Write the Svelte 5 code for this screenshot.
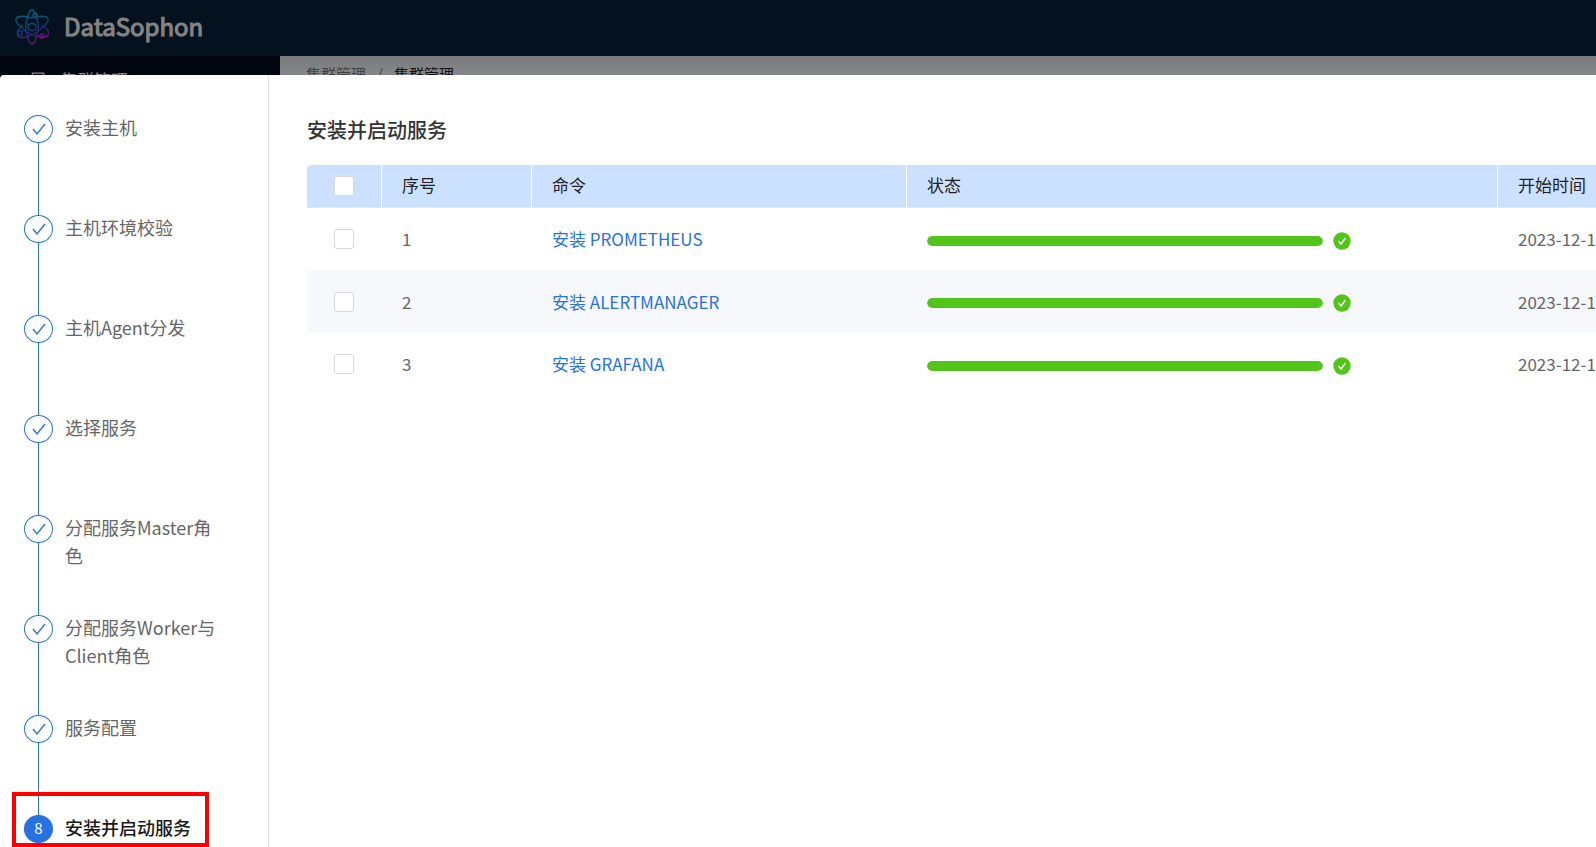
<script lang="ts">
  type Step = { title: string; done: boolean };
  type Command = { id: number; name: string; percent: number; startTime: string };

  const steps: Step[] = [
    { title: '安装主机', done: true },
    { title: '主机环境校验', done: true },
    { title: '主机Agent分发', done: true },
    { title: '选择服务', done: true },
    { title: '分配服务Master角色', done: true },
    { title: '分配服务Worker与Client角色', done: true },
    { title: '服务配置', done: true },
    { title: '安装并启动服务', done: false },
  ];

  const commands: Command[] = [
    { id: 1, name: '安装 PROMETHEUS', percent: 100, startTime: '2023-12-1' },
    { id: 2, name: '安装 ALERTMANAGER', percent: 100, startTime: '2023-12-1' },
    { id: 3, name: '安装 GRAFANA', percent: 100, startTime: '2023-12-1' },
  ];

  let selected: number[] = $state([]);
  let allSelected = $derived(selected.length === commands.length);

  function toggleAll() {
    selected = allSelected ? [] : commands.map((c) => c.id);
  }
</script>

<div class="layout">
  <header class="topbar">
    <svg class="logo" viewBox="0 0 34 36" aria-hidden="true">
      <defs>
        <linearGradient id="atom" gradientUnits="userSpaceOnUse" x1="12" y1="0" x2="22" y2="36">
          <stop offset="0" stop-color="#00c8dc" />
          <stop offset="0.5" stop-color="#1470d8" />
          <stop offset="0.7" stop-color="#6a3ad0" />
          <stop offset="0.9" stop-color="#f01ccc" />
        </linearGradient>
      </defs>
      <g fill="none" stroke="url(#atom)" stroke-width="1.4">
        <path d="M12 11c1-6 3-10 5-10s4 4 5 10" />
        <path d="M12 25c1 6 3 10 5 10s4-4 5-10" />
        <path d="M17 9C9 6 2 7 1 10s5 9 13 14 17 5 19 2-1-7-6-10" />
        <path d="M17 9c8-3 15-2 16 1s-5 9-13 14-15 6-17 3 0-7 5-11" />
        <path d="M12 11c-2 5-2 9 0 14M22 11c2 5 2 9 0 14" />
        <path d="M17 14l4 2v4l-4 2-4-2v-4z" />
        <circle cx="20" cy="6" r="2" />
        <circle cx="27" cy="27" r="2" />
        <path d="M3 22h4v4H3z" />
      </g>
    </svg>
    <span class="brand">DataSophon</span>
  </header>
  <div class="body">
    <aside class="side">
      <svg class="side-icon" viewBox="0 0 14 14" aria-hidden="true">
        <path d="M2 1h10v12H2zM5 5h4M5 8h4" fill="none" stroke="#fff" />
      </svg>
      <span>集群管理</span>
    </aside>
    <nav class="crumbs">
      <span>集群管理</span>
      <span>/</span>
      <span class="current">集群管理</span>
    </nav>
  </div>
</div>

<div class="mask"></div>

<div class="modal" role="dialog" aria-label="安装并启动服务">
  <ol class="steps">
    {#each steps as step, i}
      <li class="step" class:active={!step.done}>
        <span class="step-icon">
          {#if step.done}
            <svg viewBox="0 0 14 14" aria-hidden="true">
              <path d="M1 7l4 5 8-10" fill="none" stroke="currentColor" stroke-width="1.4" />
            </svg>
          {:else}
            {i + 1}
          {/if}
        </span>
        <span class="step-title">{step.title}</span>
        {#if !step.done}
          <span class="highlight"></span>
        {/if}
      </li>
    {/each}
  </ol>

  <main class="content">
    <h1>安装并启动服务</h1>
    <table>
      <colgroup>
        <col class="col-check" />
        <col class="col-index" />
        <col class="col-name" />
        <col class="col-status" />
        <col />
      </colgroup>
      <thead>
        <tr>
          <th class="check">
            <input type="checkbox" aria-label="全选" checked={allSelected} onchange={toggleAll} />
          </th>
          <th>序号</th>
          <th>命令</th>
          <th>状态</th>
          <th>开始时间</th>
        </tr>
      </thead>
      <tbody>
        {#each commands as command (command.id)}
          <tr>
            <td class="check">
              <input type="checkbox" aria-label={command.name} value={command.id} bind:group={selected} />
            </td>
            <td>{command.id}</td>
            <td><a href="#{command.id}">{command.name}</a></td>
            <td>
              <div class="progress">
                <div class="track">
                  <div class="bar" style="width: {command.percent}%"></div>
                </div>
                <svg viewBox="0 0 18 18" aria-hidden="true">
                  <circle cx="9" cy="9" r="8.7" fill="#52c41a" />
                  <path d="M5.5 9l2.5 3 4.5-6" fill="none" stroke="#fff" stroke-width="1.4" />
                </svg>
              </div>
            </td>
            <td>{command.startTime}</td>
          </tr>
        {/each}
      </tbody>
    </table>
  </main>
</div>

<style>
  :global(body) {
    margin: 0;
    overflow: hidden;
    font-family: "Noto Sans CJK SC", sans-serif;
  }

  .layout { display: flex; flex-direction: column; height: 100vh; background: #f0f2f5; }
  .topbar { display: flex; align-items: center; gap: 15px; height: 56px; padding: 0 15px; box-sizing: border-box; background: #08203a; }
  .logo { width: 34px; height: 36px; padding-bottom: 2px; }
  .brand { padding-bottom: 4px; color: #f0f0f0; font-size: 24px; line-height: 36px; font-weight: 400; -webkit-text-stroke: 1px #f0f0f0; }
  .body { display: flex; flex: 1; }
  .side {
    display: flex; gap: 14px; width: 280px; padding: 12px 30px; box-sizing: border-box;
    background: #030c1c; color: #fff; font-size: 17px; line-height: 24px;
  }
  .side-icon { width: 16px; height: 24px; }
  .crumbs {
    display: flex; flex: 1; gap: 11px; padding: 7px 26px; font-size: 15px; line-height: 22px; color: #777;
    background: linear-gradient(#dcdee0, #f0f2f5 16px);
  }
  .crumbs .current { color: #222; }

  .mask { position: fixed; inset: 0; background: rgba(0, 0, 0, 0.45); }

  .modal {
    position: fixed; inset: 75px 0 0; display: flex; overflow: hidden;
    background: #fff; border-radius: 4px 0 0;
  }

  .steps {
    flex: none; width: 269px; margin: 0; padding: 40px 24px 0; box-sizing: border-box;
    list-style: none; border-right: 1px solid #e4e4e4;
  }
  .step { position: relative; display: flex; gap: 12px; height: 100px; color: #666; }
  .step:not(:last-child)::after {
    content: ""; position: absolute; left: 14px; top: 28px; bottom: 0; width: 1px; background: #2872e0;
  }
  .step-icon {
    display: flex; flex: none; align-items: center; justify-content: center;
    width: 29px; height: 28px; box-sizing: border-box;
    border: 1px solid #2872e0; border-radius: 50%; color: #2872e0; font-size: 15px; line-height: 20px;
  }
  .step-icon svg { width: 14px; height: 14px; }
  .step-title { width: 152px; margin-top: -2px; font-size: 18px; line-height: 28px; }
  .active { color: #1a1a1a; }
  .active .step-title { font-weight: 500; }
  .active .step-icon { padding-bottom: 2px; background: #2872e0; color: #fff; }
  .highlight {
    position: absolute; left: -12px; top: -23px; width: 197px; height: 55px;
    box-sizing: border-box; border: 4px solid #f00;
  }

  .content { flex: 1; min-width: 0; padding: 40px 0 0 38px; overflow: hidden; }
  h1 { margin: 0 0 20px; font-size: 20px; line-height: 30px; font-weight: 500; color: #333; }

  table { width: 100%; min-width: 1560px; table-layout: fixed; border-collapse: separate; border-spacing: 0; font-size: 17px; line-height: 26px; color: #666; }
  .col-check { width: 75px; }
  .col-index { width: 150px; }
  .col-name { width: 375px; }
  .col-status { width: 591px; }
  th, td { padding: 0 20px; text-align: left; white-space: nowrap; }
  th {
    height: 43px; padding-bottom: 2px; box-sizing: border-box; background: #cce1ff; color: #1f1f1f; font-weight: 400;
    border-right: 1px solid #fff; border-bottom: 1px solid #e4e8ee;
  }
  th:first-child { border-top-left-radius: 4px; }
  td { height: 62px; }
  tbody tr:nth-child(even) td { height: 63px; background: #f6f8fc; }
  .check { padding: 0 1px 0 0; text-align: center; }
  th.check { padding: 0; }
  input {
    appearance: none; display: block; width: 20px; height: 20px; margin: 0 auto;
    background: #fff; border: 1px solid #d9d9d9; border-radius: 3px;
  }
  input:checked { background: #2872e0; border-color: #2872e0; }
  a { color: #2872e0; text-decoration: none; }

  .progress { display: flex; align-items: center; gap: 10px; padding-top: 3px; }
  .track { width: 396px; height: 10px; border-radius: 5px; background: #f5f5f5; overflow: hidden; }
  .bar { height: 100%; border-radius: 5px; background: #52c41a; }
  .progress svg { width: 18px; height: 18px; }
</style>
